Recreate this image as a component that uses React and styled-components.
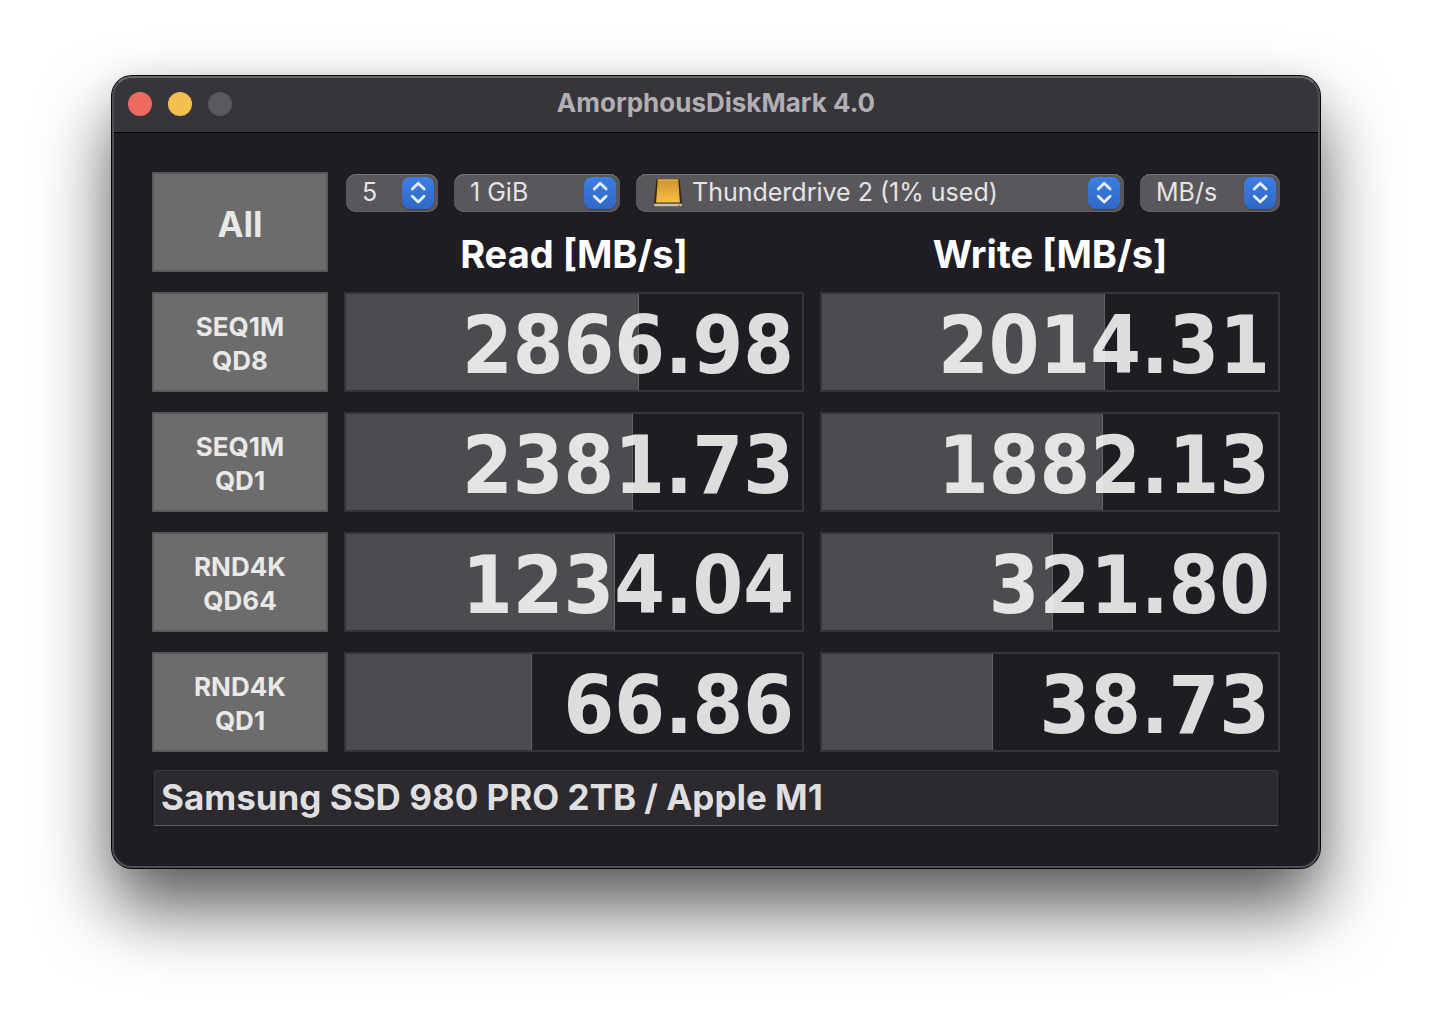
import React, { useState } from "react";
import styled, { createGlobalStyle } from "styled-components";

const GlobalStyle = createGlobalStyle`
  *, *::before, *::after { box-sizing: border-box; }
  body {
    margin: 0;
    background: #fff;
    font-family: Inter, "Liberation Sans", sans-serif;
    color: #e4e4e5;
  }
`;

const Desktop = styled.main`
  padding: 76px 112px 148px;
`;

const Window = styled.section`
  position: relative;
  border-radius: 20px;
  background: #1f1c23;
  box-shadow:
    0 0 0 1px #050506,
    0 40px 72px rgba(0, 0, 0, 0.65),
    0 0 30px rgba(0, 0, 0, 0.06);

  /* light rim drawn over the title bar and the body */
  &::after {
    content: "";
    position: absolute;
    inset: 0;
    border: 2px solid #504e54;
    border-top-color: #6b696e;
    border-radius: 20px;
    pointer-events: none;
  }
`;

const TitleBar = styled.header`
  display: grid;
  grid-template-columns: 1fr auto 1fr;
  align-items: center;
  height: 57px;
  padding: 0 16px;
  border-bottom: 1px solid #000;
  border-radius: 20px 20px 0 0;
  background: #37343a;
`;

const Lights = styled.div`
  display: flex;
  gap: 16px;
`;

const Light = styled.button`
  width: 24px;
  height: 24px;
  padding: 0;
  border: 0;
  border-radius: 50%;
  background: ${(p) => p.$color};
`;

const Title = styled.h1`
  margin: 0;
  padding-bottom: 2px;
  font-size: 26px;
  line-height: 30px;
  font-weight: 700;
  color: #b1afb4;
`;

const Body = styled.div`
  display: flex;
  flex-direction: column;
  gap: 18px;
  padding: 39px 40px 42px;
`;

const Grid = styled.div`
  display: grid;
  grid-template-columns: 176px 1fr 1fr;
  grid-auto-rows: 100px;
  gap: 20px 16px;
`;

const TestButton = styled.button`
  padding: 4px 0 0;
  border: 2px solid #59575c;
  background: #6c6c6c;
  color: #e8e8e8;
  font-family: inherit;
  font-size: ${(p) => (p.$large ? 35 : 26)}px;
  line-height: 34px;
  font-weight: 700;
  white-space: pre-line;
`;

const Top = styled.div`
  grid-column: span 2;
  display: flex;
  flex-direction: column;
  gap: 20px;
  padding-top: 2px;
`;

const Controls = styled.div`
  display: grid;
  grid-template-columns: 92px 166px 1fr 140px;
  gap: 16px;
  padding-left: 2px;
`;

const Picker = styled.label`
  display: grid;
  align-items: center;
  height: 38px;
  border-radius: 10px;
  background: #5a575c;
  box-shadow: inset 0 1px 0 #75737a, inset 0 -1px 0 #656368;

  > * { grid-area: 1 / 1; }
`;

const Select = styled.select`
  appearance: none;
  width: 100%;
  height: 36px;
  padding: 0 40px 2px ${(p) => (p.$icon ? 56 : 16)}px;
  border: 0;
  background: transparent;
  color: #e4e4e5;
  font-family: inherit;
  font-size: 25px;
  font-weight: 400;
`;

const Stepper = styled.svg`
  justify-self: end;
  width: 32px;
  height: 32px;
  margin-right: 4px;
  border-radius: 8px;
  background: linear-gradient(#3c7fe2, #2f68c6);
  box-shadow: 0 1px 1px rgba(0, 0, 0, 0.3);
  pointer-events: none;
`;

const DriveArt = styled.svg`
  width: 30px;
  height: 32px;
  margin-left: 17px;
  pointer-events: none;
`;

const Headings = styled.div`
  display: grid;
  grid-template-columns: 1fr 1fr;
  gap: 16px;
`;

const Heading = styled.h2`
  margin: 0;
  text-align: center;
  font-size: 38px;
  line-height: 44px;
  font-weight: 700;
  color: #fff;
`;

const Cell = styled.div`
  display: grid;
  grid-template-rows: 96px;
  border: 2px solid #36333a;

  > * { grid-area: 1 / 1; }
`;

const Bar = styled.div`
  border-right: 1px solid #636166;
  background: #4d4b4f;
`;

const Figure = styled.output`
  z-index: 1;
  padding: 6px 8px 0 0;
  text-align: right;
  font-family: "DejaVu Sans Condensed", "DejaVu Sans", sans-serif;
  font-size: 81px;
  line-height: 90px;
  font-weight: 700;
  color: rgba(255, 255, 255, 0.85);
`;

const Note = styled.input`
  height: 56px;
  margin: 0 2px;
  padding: 0 6px 2px;
  border: 1px solid #3a373e;
  border-bottom-color: #615f64;
  border-radius: 0;
  background: #2c292f;
  color: #dfdfe0;
  font-family: inherit;
  font-size: 35px;
  font-weight: 700;
`;

const tests = [
  { name: "SEQ1M\nQD8", read: ["2866.98", 64.2], write: ["2014.31", 62.1] },
  { name: "SEQ1M\nQD1", read: ["2381.73", 63], write: ["1882.13", 61.6] },
  { name: "RND4K\nQD64", read: ["1234.04", 59], write: ["321.80", 50.6] },
  { name: "RND4K\nQD1", read: ["66.86", 40.8], write: ["38.73", 37.5] },
];

function Drive() {
  return (
    <DriveArt viewBox="0 0 30 32" aria-hidden="true">
      <defs>
        <linearGradient id="gold" x1="0" y1="0" x2="0" y2="1">
          <stop offset="0" stopColor="#cf922d" />
          <stop offset="1" stopColor="#f9c145" />
        </linearGradient>
      </defs>
      <path d="M3.5 2h23L29 26v3.5q0 1-1 1H2q-1 0-1-1V26z" fill="#35270f" />
      <path d="M4.8 2.6h20.4l1.7 23h-23.8z" fill="url(#gold)" />
      <path d="M4.6 3h20.8" stroke="#f3c163" strokeWidth="1" />
      <path d="M1.2 26.6h27.6v2.8H1.2z" fill="#c5c3b5" />
      <path d="M2 30h26" stroke="#777568" strokeWidth="1" />
      <path d="M25 28.3h1.8" stroke="#4f8a55" strokeWidth="1" />
    </DriveArt>
  );
}

function Popup({ label, options, icon }) {
  return (
    <Picker>
      <Select aria-label={label} $icon={icon} defaultValue={options[0]}>
        {options.map((o) => (
          <option key={o}>{o}</option>
        ))}
      </Select>
      {icon && <Drive />}
      <Stepper viewBox="0 0 32 32" aria-hidden="true">
        <path
          d="M10.3 12 16.2 6.3 22.1 12M10.3 19.3 16.2 25 22.1 19.3"
          fill="none"
          stroke="#e6effb"
          strokeWidth="2.8"
          strokeLinecap="round"
          strokeLinejoin="round"
        />
      </Stepper>
    </Picker>
  );
}

function Result({ result: [value, share] }) {
  return (
    <Cell>
      <Bar style={{ width: `${share}%` }} />
      <Figure>{value}</Figure>
    </Cell>
  );
}

export default function App() {
  const [note, setNote] = useState("Samsung SSD 980 PRO 2TB / Apple M1");
  return (
    <Desktop>
      <GlobalStyle />
      <Window>
        <TitleBar>
          <Lights>
            <Light $color="#ed6a5e" aria-label="Close" />
            <Light $color="#f5bf4f" aria-label="Minimize" />
            <Light $color="#5a575d" aria-label="Zoom" disabled />
          </Lights>
          <Title>AmorphousDiskMark 4.0</Title>
        </TitleBar>
        <Body>
          <Grid>
            <TestButton $large>All</TestButton>
            <Top>
              <Controls>
                <Popup label="Test count" options={["5"]} />
                <Popup label="Test size" options={["1 GiB"]} />
                <Popup label="Drive" options={["Thunderdrive 2 (1% used)"]} icon />
                <Popup label="Unit" options={["MB/s"]} />
              </Controls>
              <Headings>
                <Heading>Read [MB/s]</Heading>
                <Heading>Write [MB/s]</Heading>
              </Headings>
            </Top>
            {tests.map((t) => (
              <React.Fragment key={t.name}>
                <TestButton>{t.name}</TestButton>
                <Result result={t.read} />
                <Result result={t.write} />
              </React.Fragment>
            ))}
          </Grid>
          <Note
            aria-label="Note"
            value={note}
            onChange={(e) => setNote(e.target.value)}
          />
        </Body>
      </Window>
    </Desktop>
  );
}
